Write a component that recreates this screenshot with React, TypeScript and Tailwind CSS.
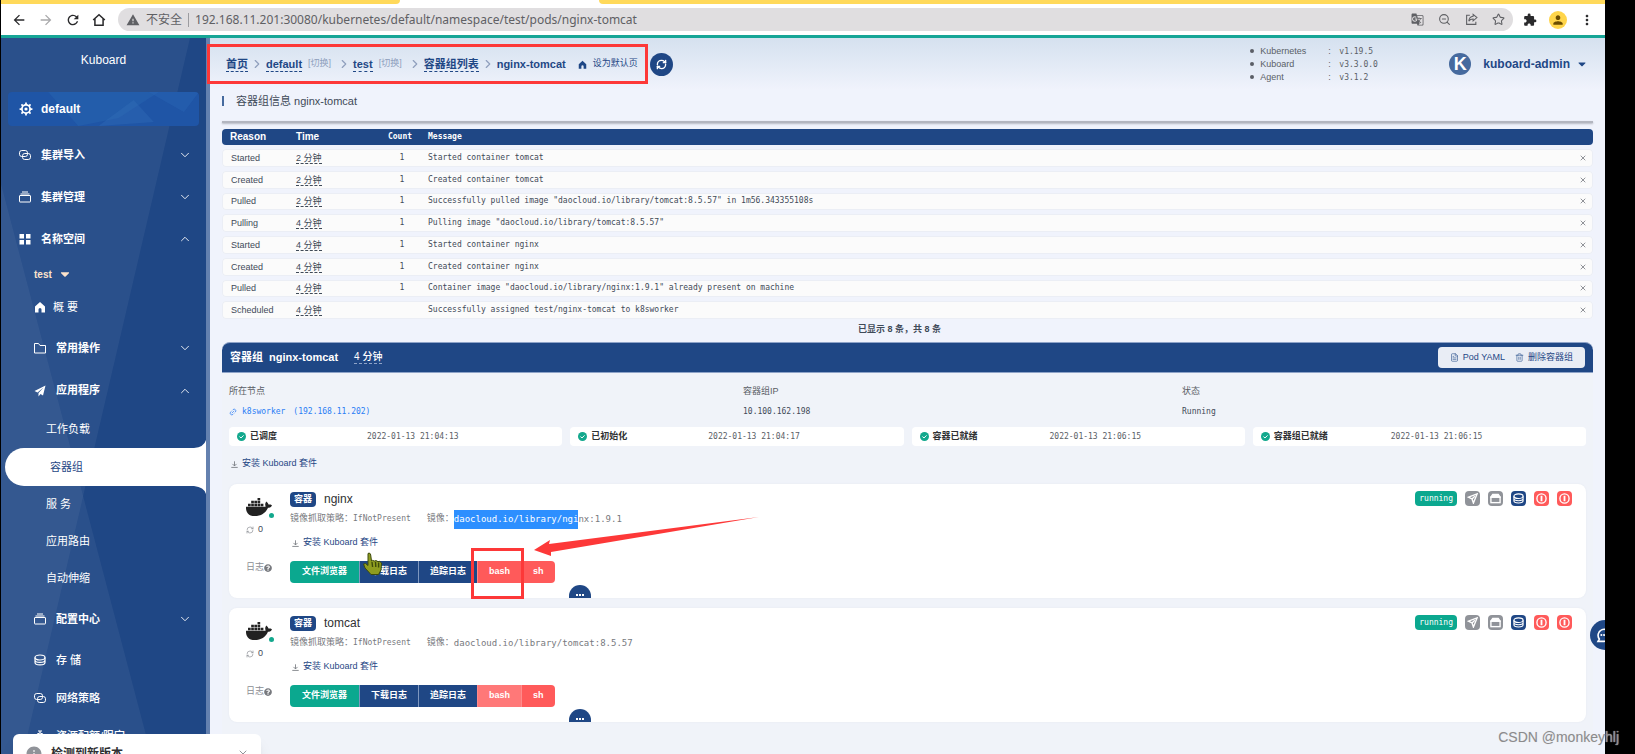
import React from "react";
import { FaCaretDown, FaDocker, FaQuestionCircle } from "react-icons/fa";
import {
  MdArrowBack,
  MdArrowForward,
  MdExtension,
  MdGTranslate,
  MdInfo,
  MdMoreVert,
  MdPerson,
  MdRefresh,
  MdWarning,
} from "react-icons/md";
import {
  ChevronDown,
  ChevronRight,
  ChevronUp,
  FileText,
  Link2,
  RefreshCw,
  Star,
  Trash2,
  X,
  ZoomOut,
} from "lucide-react";

type IconProps = { className?: string };

const GearIcon = ({ className }: IconProps) => (
  <svg viewBox="0 0 24 24" fill="none" stroke="currentColor" className={className}>
    <circle cx="12" cy="12" r="7" strokeWidth="3" />
    <circle cx="12" cy="12" r="1.5" strokeWidth="2.5" />
    <path d="M12 1v4M12 19v4M1 12h4M19 12h4M4.200 4.200 7 7M17 17l2.800 2.800M4.200 19.800 7 17M17 7l2.800-2.800" strokeWidth="3" />
  </svg>
);

const ConnectionIcon = ({ className }: IconProps) => (
  <svg viewBox="0 0 24 24" fill="none" stroke="currentColor" strokeWidth="2" className={className}>
    <rect x="1" y="3" width="16" height="12" rx="4.500" />
    <rect x="7" y="9" width="16" height="12" rx="4.500" />
  </svg>
);

const BoxIcon = ({ className }: IconProps) => (
  <svg viewBox="0 0 24 24" fill="none" stroke="currentColor" strokeWidth="2" className={className}>
    <rect x="1" y="9" width="22" height="13" rx="1" />
    <path d="M3 6h18M6 2h12" />
  </svg>
);

const FolderIcon = ({ className }: IconProps) => (
  <svg viewBox="0 0 24 24" fill="none" stroke="currentColor" strokeWidth="2" className={className}>
    <path d="M1 3h8l3 4h11v15H1z" />
  </svg>
);

const CoinIcon = ({ className }: IconProps) => (
  <svg viewBox="0 0 24 24" fill="none" stroke="currentColor" strokeWidth="2.4" className={className}>
    <ellipse cx="12" cy="7" rx="10" ry="5" />
    <path d="M2 7v10c0 6.500 20 6.500 20 0V7M2 12c0 6.500 20 6.500 20 0" />
  </svg>
);

const GridIcon = ({ className }: IconProps) => (
  <svg viewBox="0 0 24 24" fill="currentColor" className={className}>
    <path d="M1 2h9v9H1zM14 2h9v9h-9zM1 14h9v9H1zM14 14h9v9h-9z" />
  </svg>
);

const HomeIcon = ({ className }: IconProps) => (
  <svg viewBox="0 0 24 24" fill="currentColor" className={className}>
    <path d="M12 2 2 11v12h7v-6a3 3 0 0 1 6 0v6h7V11z" />
  </svg>
);

const HomeOutlineIcon = ({ className }: IconProps) => (
  <svg viewBox="0 0 24 24" fill="none" stroke="currentColor" strokeWidth="2.6" className={className}>
    <path d="M2 12 12 3l10 9M5 10v11h14V10" />
  </svg>
);

const ShareIcon = ({ className }: IconProps) => (
  <svg viewBox="0 0 24 24" fill="none" stroke="currentColor" strokeWidth="2" className={className}>
    <path d="M9 4H3v17h17v-5" />
    <path d="M15 2.500 22 8.500l-7 6V11c-4 0-6 1-8 4 .5-5 3-8.500 8-9z" />
  </svg>
);

const DownloadIcon = ({ className }: IconProps) => (
  <svg viewBox="0 0 24 24" fill="none" stroke="currentColor" strokeWidth="2.400" className={className}>
    <path d="M12 1v15M5 10l7 7 7-7M1 22h22" />
  </svg>
);

const PlaneIcon = ({ className }: IconProps) => (
  <svg viewBox="0 0 24 24" fill="currentColor" className={className}>
    <path d="M23 1 1 12l6 3L19 5 9 16v7l4-5 5 3z" />
  </svg>
);

const TimerIcon = ({ className }: IconProps) => (
  <svg viewBox="0 0 24 24" fill="none" stroke="currentColor" strokeWidth="2" className={className}>
    <circle cx="12" cy="14" r="8" />
    <path d="M8 2h8M12 2v4M12 10v4" />
  </svg>
);

const SendIcon = ({ className }: IconProps) => (
  <svg viewBox="0 0 24 24" fill="none" stroke="currentColor" strokeWidth="3" className={className}>
    <path d="M22 2 3 9l8 4 3 9z" />
    <path d="m11 13 6-6" />
  </svg>
);

const PrinterIcon = ({ className }: IconProps) => (
  <svg viewBox="0 0 24 24" fill="none" stroke="currentColor" strokeWidth="3" className={className}>
    <rect x="2" y="9" width="20" height="12" />
    <path d="M2 9 6 3h12l4 6z" fill="currentColor" />
  </svg>
);

const PowerIcon = ({ className }: IconProps) => (
  <svg viewBox="0 0 24 24" fill="none" stroke="currentColor" strokeWidth="3" className={className}>
    <circle cx="12" cy="12" r="10" />
    <path d="M12 6v12" strokeWidth="4" />
  </svg>
);

const CheckIcon = ({ className }: IconProps) => (
  <svg viewBox="0 0 24 24" className={className}>
    <circle cx="12" cy="12" r="12" fill="#13a88d" />
    <path d="m6.500 12 4 4 7-7" fill="none" stroke="#fff" strokeWidth="2.600" />
  </svg>
);

const ChatIcon = ({ className }: IconProps) => (
  <svg viewBox="0 0 24 24" fill="none" stroke="currentColor" strokeWidth="2.400" className={className}>
    <path d="M3 21.500 5 18A9 9 0 1 1 12 21.500z" />
    <path d="M8 12h.1M12 12h.1M16 12h.1" strokeWidth="3" strokeLinecap="round" />
  </svg>
);

const HandCursor = ({ className }: IconProps) => (
  <svg viewBox="0 0 20 24" className={className}>
    <path
      d="M5 1.500c1.500-1 2.500 0 2.700 1.500l.8 6 1-.6 2 .6 1.500-.4 2 1 1.800-.2 1.700 1.600-.5 7-2.500 4.500H8L2 16l-1.500-4 2-.5 2.500 2z"
      fill="#8f9d20"
      stroke="#3d4a0c"
      strokeWidth="1"
    />
    <path d="m9 10 .6 5M12.500 10l.3 5M15.600 10.500v5" stroke="#3d4a0c" strokeWidth="1.400" />
  </svg>
);

const topMenu = [
  { label: "集群导入", icon: ConnectionIcon, open: false },
  { label: "集群管理", icon: BoxIcon, open: false },
  { label: "名称空间", icon: GridIcon, open: true },
];

const appMenu = ["工作负载", "容器组", "服 务", "应用路由", "自动伸缩"];

const bottomMenu = [
  { label: "存 储", icon: CoinIcon },
  { label: "网络策略", icon: ConnectionIcon },
  { label: "资源配额/限定", icon: TimerIcon },
];

const versions = [
  { name: "Kubernetes", value: "v1.19.5" },
  { name: "Kuboard", value: "v3.3.0.0" },
  { name: "Agent", value: "v3.1.2" },
];

const events = [
  { reason: "Started", time: "2 分钟", count: "1", message: "Started container tomcat" },
  { reason: "Created", time: "2 分钟", count: "1", message: "Created container tomcat" },
  {
    reason: "Pulled",
    time: "2 分钟",
    count: "1",
    message: 'Successfully pulled image "daocloud.io/library/tomcat:8.5.57" in 1m56.343355108s',
  },
  { reason: "Pulling", time: "4 分钟", count: "1", message: 'Pulling image "daocloud.io/library/tomcat:8.5.57"' },
  { reason: "Started", time: "4 分钟", count: "1", message: "Started container nginx" },
  { reason: "Created", time: "4 分钟", count: "1", message: "Created container nginx" },
  {
    reason: "Pulled",
    time: "4 分钟",
    count: "1",
    message: 'Container image "daocloud.io/library/nginx:1.9.1" already present on machine',
  },
  { reason: "Scheduled", time: "4 分钟", count: "", message: "Successfully assigned test/nginx-tomcat to k8sworker" },
];

const conditions = [
  { label: "已调度", time: "2022-01-13 21:04:13" },
  { label: "已初始化", time: "2022-01-13 21:04:17" },
  { label: "容器已就绪", time: "2022-01-13 21:06:15" },
  { label: "容器组已就绪", time: "2022-01-13 21:06:15" },
];

const actions = [
  { label: "进入", icon: SendIcon, color: "bg-[#909399]" },
  { label: "打印", icon: PrinterIcon, color: "bg-[#909399]" },
  { label: "存储", icon: CoinIcon, color: "bg-[#1f4785]" },
  { label: "存活检查", icon: PowerIcon, color: "bg-[#ff5a5a]" },
  { label: "就绪检查", icon: PowerIcon, color: "bg-[#ff5a5a]" },
];

const BrowserBar: React.FC = () => (
  <div className="bg-white">
    <div className="flex h-1">
      <div className="w-[399px] rounded-br-sm bg-[#ffd95a]" />
      <div className="w-[199px]" />
      <div className="flex-1 rounded-bl-sm bg-[#ffd95a]" />
    </div>
    <div className="flex h-[31px] items-center text-[#2a2a2c]">
      <div className="flex w-[117px] items-center gap-[11px] pl-2.5">
        <button aria-label="后退"><MdArrowBack className="size-4" /></button>
        <button aria-label="前进" className="text-[#a9a9ab]"><MdArrowForward className="size-4" /></button>
        <button aria-label="刷新"><MdRefresh className="size-4" /></button>
        <button aria-label="主页"><HomeOutlineIcon className="size-3.5" /></button>
      </div>
      <div className="flex h-[23px] flex-1 items-center rounded-full bg-[#e0dee0] px-2 text-[#5f6064]">
        <MdWarning className="size-3.5" />
        <span className="ml-1.5 text-[12px]">不安全</span>
        <span className="mx-1.5 h-3.5 w-px bg-[#9c9ca0]" />
        <input
          aria-label="地址"
          readOnly
          className="min-w-0 flex-1 bg-transparent font-['Noto_Sans',sans-serif] text-[12px] outline-none"
          value="192.168.11.201:30080/kubernetes/default/namespace/test/pods/nginx-tomcat"
        />
        <div className="flex items-center gap-[14px]">
          <button aria-label="翻译"><MdGTranslate className="size-[13px]" /></button>
          <button aria-label="缩放"><ZoomOut className="size-[13px]" /></button>
          <button aria-label="分享"><ShareIcon className="size-[13px]" /></button>
          <button aria-label="收藏"><Star className="size-[13px]" /></button>
        </div>
      </div>
      <div className="flex items-center gap-3 pl-2.5 pr-2.5">
        <button aria-label="扩展程序"><MdExtension className="size-3.5" /></button>
        <button aria-label="用户" className="flex size-[18px] items-center justify-center rounded-full bg-[#ffd54a] text-[#6b4c00]">
          <MdPerson className="size-3.5" />
        </button>
        <button aria-label="更多"><MdMoreVert className="size-4" /></button>
      </div>
    </div>
    <div className="h-[3px] bg-[#16a596]" />
  </div>
);

const Sidebar: React.FC = () => (
  <aside className="relative w-[209px] shrink-0 overflow-hidden border-r-4 border-[#6481af] bg-[#1f4785] text-[11px] text-white">
    <svg className="absolute inset-0 h-full w-full" viewBox="0 0 205 716" preserveAspectRatio="none" aria-hidden="true">
      <polygon points="0,0 189,0 22,716 0,716" fill="#fff" fillOpacity="0.05" />
      <polygon points="0,146 150,716 0,716" fill="#fff" fillOpacity="0.05" />
    </svg>
    <div className="relative">
      <div className="flex h-[54px] justify-center pt-3.5 text-[12px] leading-4">Kuboard</div>
      <a href="#cluster" className="relative mx-[7px] flex h-[34px] items-center overflow-hidden rounded bg-[#1f55a6] pl-[11px] text-[12px] font-bold">
        <svg className="absolute inset-0 h-full w-full" viewBox="0 0 190 34" preserveAspectRatio="none" aria-hidden="true">
          <polygon points="40,0 150,0 110,26 70,34" fill="#2b68b5" fillOpacity="0.4" />
          <polygon points="90,34 125,8 145,30" fill="#3774bd" fillOpacity="0.3" />
          <polygon points="140,0 190,0 175,20" fill="#2a66b6" fillOpacity="0.4" />
        </svg>
        <GearIcon className="relative size-3.5" />
        <span className="relative ml-2">default</span>
      </a>
      <nav className="pt-2">
        {topMenu.map((item) => (
          <a key={item.label} href="#menu" className="flex h-[42px] items-center pl-[18px] pr-[14px] font-bold">
            <item.icon className="size-3" />
            <span className="ml-2.5 flex-1">{item.label}</span>
            {item.open ? <ChevronUp className="size-3.5" strokeWidth={1.5} /> : <ChevronDown className="size-3.5" strokeWidth={1.5} />}
          </a>
        ))}
        <button className="flex h-7 items-center pl-[33px] text-[10px] font-bold text-[#fde3cb]">
          test <FaCaretDown className="ml-1.5 size-3.5" />
        </button>
        <a href="#overview" className="flex h-[38px] items-center pl-[33px]">
          <HomeIcon className="size-3" />
          <span className="ml-[7px]">概 要</span>
        </a>
        <a href="#common" className="flex h-11 items-center pl-[33px] pr-[14px] font-bold">
          <FolderIcon className="size-3" />
          <span className="ml-2.5 flex-1">常用操作</span>
          <ChevronDown className="size-3.5" strokeWidth={1.5} />
        </a>
        <a href="#apps" className="flex h-[41px] items-center pl-[33px] pr-[14px] font-bold">
          <PlaneIcon className="size-3" />
          <span className="ml-2.5 flex-1">应用程序</span>
          <ChevronUp className="size-3.5" strokeWidth={1.5} />
        </a>
        {appMenu.map((label) =>
          label === "容器组" ? (
            <a key={label} href="#pods" className="relative ml-1 flex h-[38px] items-center rounded-l-full bg-white pl-[45px] text-[#1f4785]">
              <svg className="absolute bottom-full right-0 h-2 w-3" viewBox="0 0 12 8" aria-hidden="true">
                <path d="M0 8Q10 7 12 0v8z" fill="#fff" />
              </svg>
              {label}
              <svg className="absolute right-0 top-full h-2 w-3" viewBox="0 0 12 8" aria-hidden="true">
                <path d="M0 0q10 1 12 8V0z" fill="#fff" />
              </svg>
            </a>
          ) : (
            <a key={label} href="#app" className="flex h-[37px] items-center pl-[45px]">
              {label}
            </a>
          )
        )}
        <a href="#config" className="flex h-11 items-center pl-[33px] pr-[14px] font-bold">
          <BoxIcon className="size-3" />
          <span className="ml-2.5 flex-1">配置中心</span>
          <ChevronDown className="size-3.5" strokeWidth={1.5} />
        </a>
        {bottomMenu.map((item) => (
          <a key={item.label} href="#menu" className="flex h-[38px] items-center pl-[33px] font-medium">
            <item.icon className="size-3" />
            <span className="ml-2.5">{item.label}</span>
          </a>
        ))}
      </nav>
    </div>
  </aside>
);

const Separator = () => <ChevronRight className="mx-0.5 size-3.5 text-[#8f9fbd]" />;

const Crumb = ({ children }: { children: React.ReactNode }) => (
  <a href="#crumb" className="border-b border-dashed border-[#1f4785] font-bold leading-[14px]">
    {children}
  </a>
);

const SwitchLink = () => (
  <a href="#switch" className="ml-1.5 mr-1 text-[9px] text-[#8f9fbd]">[切换]</a>
);

const PageHeader: React.FC = () => (
  <header className="flex h-[52px] items-center bg-linear-to-b from-[#d5e1ef] to-[#f0f3fc] pl-4 pr-[17px] text-[#1f4785]">
    <nav className="relative flex items-center text-[11px]" aria-label="导航">
      <Crumb>首页</Crumb>
      <Separator />
      <Crumb>default</Crumb>
      <SwitchLink />
      <Separator />
      <Crumb>test</Crumb>
      <SwitchLink />
      <Separator />
      <Crumb>容器组列表</Crumb>
      <Separator />
      <span className="font-bold">nginx-tomcat</span>
      <a href="#default" className="ml-3 flex items-center text-[9px]">
        <HomeIcon className="mr-1.5 size-[9px]" />
        设为默认页
      </a>
      <div className="pointer-events-none absolute -inset-y-3 -left-[19px] -right-2.5 border-[3px] border-[#fd3838]" />
    </nav>
    <button aria-label="刷新" className="ml-3 flex size-[23px] items-center justify-center rounded-full bg-[#1f4785] text-white">
      <RefreshCw className="size-[11px]" strokeWidth={3} />
    </button>
    <ul className="ml-auto text-[9px] leading-[13px] text-[#5a5e66]">
      {versions.map((v) => (
        <li key={v.name} className="flex items-center">
          <span className="mr-1.5 size-1 rounded-full bg-[#5a5e66]" />
          <span className="w-[68px]">{v.name}</span>
          <span className="w-[11px]">:</span>
          <span className="w-[110px] font-['DejaVu_Sans_Mono',monospace] text-[8px]">{v.value}</span>
        </li>
      ))}
    </ul>
    <button className="flex items-center text-[12px] font-bold">
      <span className="mr-3 flex size-[22px] items-center justify-center rounded-full bg-[#466a9e] text-[18px] leading-[22px] text-white">K</span>
      kuboard-admin
      <FaCaretDown className="ml-1.5 size-3" />
    </button>
  </header>
);

const EventTable: React.FC = () => (
  <table className="h-[198px] w-full table-fixed border-separate border-spacing-x-0 border-spacing-y-1 text-left text-[9px] leading-3 text-[#3f4a58]">
    <colgroup>
      <col className="w-[66px]" />
      <col className="w-[92px]" />
      <col className="w-10" />
      <col />
      <col className="w-6" />
    </colgroup>
    <thead>
      <tr className="h-4 bg-[#1f4785] text-white">
        <th className="rounded-l-sm p-0 pl-2 text-[10px]">Reason</th>
        <th className="p-0 pl-2 text-[10px]">Time</th>
        <th className="p-0 text-center font-['DejaVu_Sans_Mono',monospace] text-[8px]">Count</th>
        <th className="p-0 pl-2 font-['DejaVu_Sans_Mono',monospace] text-[8px]">Message</th>
        <th className="rounded-r-sm p-0" />
      </tr>
    </thead>
    <tbody>
      {events.map((event, index) => (
        <tr key={index} className="bg-[#fbfbfb]">
          <td className="rounded-l-sm border-y border-l border-[#ebeef5] p-0 pl-2">{event.reason}</td>
          <td className="border-y border-[#ebeef5] p-0 pl-2">
            <span className="border-b border-dashed border-[#3f4a58] leading-[10px]">{event.time}</span>
          </td>
          <td className="border-y border-[#ebeef5] p-0 pl-1 text-center font-['DejaVu_Sans_Mono',monospace] text-[8px]">{event.count}</td>
          <td className="border-y border-[#ebeef5] p-0 pl-2 font-['DejaVu_Sans_Mono',monospace] text-[8px]">{event.message}</td>
          <td className="rounded-r-sm border-y border-r border-[#ebeef5] p-0">
            <button aria-label="关闭" className="ml-2.5 block">
              <X className="size-2 text-[#5a5e66]" />
            </button>
          </td>
        </tr>
      ))}
    </tbody>
  </table>
);

const InstallLink = () => (
  <a href="#install" className="flex h-4 items-center text-[9px] text-[#1f4785]">
    <DownloadIcon className="ml-0.5 mr-1 size-[7px] text-[#5a5e66]" />
    安装 Kuboard 套件
  </a>
);

type ContainerCardProps = {
  name: string;
  selected?: string;
  image: string;
  highlight?: boolean;
};

const ContainerCard: React.FC<ContainerCardProps> = ({ name, selected, image, highlight }) => (
  <section className="relative flex rounded-lg bg-white pb-[15px] shadow-[0_0_2px_#e3e7ef]">
    <div className="w-[61px] pl-[17px] pt-2.5 text-[9px] text-[#8a8d93]">
      <div className="relative w-[26px]">
        <FaDocker className="size-[26px] text-[#222]" />
        <span className="absolute -right-0.5 bottom-0.5 size-[5px] rounded-full bg-[#13a88d]" />
      </div>
      <div className="mt-0.5 flex h-4 items-center">
        <RefreshCw className="mr-1 size-2" />
        <span className="text-[#3f4a58]">0</span>
      </div>
      <div className="mt-[22px] flex h-4 items-center">
        日志
        <FaQuestionCircle className="size-2 text-[#77797e]" />
      </div>
    </div>
    <div className="flex-1 pt-[7px] text-[9px]">
      <div className="flex h-4 items-center">
        <span className="rounded-sm bg-[#1f4785] px-1 text-[9px] font-bold leading-[15px] text-white">容器</span>
        <h3 className="ml-2 text-[12px] text-[#303133]">{name}</h3>
      </div>
      <div className="mt-1 flex h-4 items-center text-[#77797e]">
        镜像抓取策略：
        <span className="font-['DejaVu_Sans_Mono',monospace] text-[8px]">IfNotPresent</span>
        <span className="ml-4">镜像：</span>
        <span className="font-['DejaVu_Sans_Mono',monospace] leading-[19px]">
          {selected && <span className="inline-block bg-[#2d8fff] text-white">{selected}</span>}
          {image}
        </span>
      </div>
      <div className="mt-2"><InstallLink /></div>
      <div className="mt-2.5 flex h-[22px] w-fit overflow-hidden rounded-sm font-bold text-white">
        <button className="bg-[#0ba88f] px-3">文件浏览器</button>
        <button className="border-l border-[#7e97bf] bg-[#1f4785] px-[11px]">下载日志</button>
        <button className="border-l border-[#7e97bf] bg-[#1f4785] px-[11px]">追踪日志</button>
        <button className={`border-l border-[#ff8a8a] px-[11px] ${highlight ? "bg-[#ff5a5a]" : "bg-[#ff7878]"}`}>bash</button>
        <button className="border-l border-[#ff8a8a] bg-[#ff5a5a] px-[11px]">sh</button>
      </div>
    </div>
    <div className="flex items-start gap-2 pr-3.5 pt-[7px]">
      <span className="rounded-sm bg-[#0ba88f] px-1 font-['DejaVu_Sans_Mono',monospace] text-[8px] leading-[15px] text-white">running</span>
      {actions.map((action) => (
        <button key={action.label} aria-label={action.label} className={`flex size-[15px] items-center justify-center rounded-sm text-white ${action.color}`}>
          <action.icon className="size-[11px]" />
        </button>
      ))}
    </div>
    <button
      aria-label="更多"
      className="absolute bottom-0 left-[340px] flex h-[13px] w-[22px] items-end justify-center gap-px rounded-t-[11px] bg-[#1f4785] pb-0.5"
    >
      <span className="size-0.5 bg-white" />
      <span className="size-0.5 bg-white" />
      <span className="size-0.5 bg-white" />
    </button>
    {highlight && (
      <>
        <div className="pointer-events-none absolute left-[242px] top-16 h-[51px] w-[53px] border-[3px] border-[#fd3838]" />
        <svg className="pointer-events-none absolute left-[305px] top-8 h-10 w-[226px]" viewBox="0 0 226 40" aria-hidden="true">
          <polygon points="0,34 16,24 15,28 225,1 17,36 17,40" fill="#fd3838" />
        </svg>
        <HandCursor className="pointer-events-none absolute left-[134px] top-[68px] h-6 w-5" />
      </>
    )}
  </section>
);

const PodPanel: React.FC = () => (
  <div className="rounded-t-lg bg-[#f0f3f9]">
    <div className="flex h-[31px] items-center rounded-t-lg border-y border-[#8ea3c8] bg-[#1f4785] pl-2 pr-2 text-[11px] font-bold text-white">
      <span>容器组</span>
      <h2 className="ml-1.5">nginx-tomcat</h2>
      <span className="ml-4 border-b border-dashed border-[#8ea3c8] text-[10px] font-medium leading-3">4 分钟</span>
      <div className="ml-auto flex h-[21px] items-center gap-2.5 rounded bg-[#e9edf5] px-3 text-[9px] font-normal text-[#1f4785]">
        <button className="flex items-center"><FileText className="mr-1 size-[9px]" strokeWidth={1.5} />Pod YAML</button>
        <button className="flex items-center"><Trash2 className="mr-1 size-[9px]" strokeWidth={1.5} />删除容器组</button>
      </div>
    </div>
    <div className="px-[7px] pt-2.5 text-[9px] text-[#5a5e66]">
      <dl className="grid grid-cols-[514fr_439fr_404fr] leading-4">
        <div>
          <dt>所在节点</dt>
          <dd className="mt-[5px] flex items-center font-['DejaVu_Sans_Mono',monospace] text-[8px] leading-4 text-[#2a7df5]">
            <Link2 className="mr-[5px] size-2 -rotate-45" />
            <a href="#node">k8sworker</a>
            <a href="#node" className="ml-2">(192.168.11.202)</a>
          </dd>
        </div>
        <div>
          <dt>容器组IP</dt>
          <dd className="mt-[5px] font-['DejaVu_Sans_Mono',monospace] text-[8px] leading-4 text-[#3f4a58]">10.100.162.198</dd>
        </div>
        <div>
          <dt>状态</dt>
          <dd className="mt-[5px] font-['DejaVu_Sans_Mono',monospace] text-[8px] leading-4 text-[#3f4a58]">Running</dd>
        </div>
      </dl>
      <div className="mt-[7px] grid grid-cols-4 gap-2">
        {conditions.map((condition) => (
          <div key={condition.label} className="flex h-[19px] items-center rounded bg-white">
            <div className="flex w-[138px] items-center pl-2 font-bold text-[#303133]">
              <CheckIcon className="mr-1 size-[9px]" />
              {condition.label}
            </div>
            <span className="font-['DejaVu_Sans_Mono',monospace] text-[8px]">{condition.time}</span>
          </div>
        ))}
      </div>
      <div className="mt-2.5"><InstallLink /></div>
      <div className="mt-3 flex flex-col gap-2.5 pb-8">
        <ContainerCard name="nginx" selected="daocloud.io/library/ngi" image="nx:1.9.1" highlight />
        <ContainerCard name="tomcat" image="daocloud.io/library/tomcat:8.5.57" />
      </div>
    </div>
  </div>
);

const App: React.FC = () => (
  <div className="relative h-screen overflow-hidden bg-black pl-px pr-[30px] font-['Liberation_Sans','Noto_Sans_CJK_SC',sans-serif]">
    <div className="relative flex h-full flex-col overflow-hidden">
      <BrowserBar />
      <div className="flex min-h-0 flex-1">
        <Sidebar />
        <main className="min-w-0 flex-1 bg-[#f0f3fc]">
          <PageHeader />
          <div className="px-3">
            <div className="flex h-[22px] items-center text-[11px] text-[#3f4a58]">
              <span className="mr-3 h-2.5 w-0.5 bg-[#466a9e]" />
              <h1>容器组信息 nginx-tomcat</h1>
            </div>
            <div className="mb-0.5 mt-[9px] h-0.5 bg-[#b3b6c0] shadow-[0_1px_2px_#b3b6c0]" />
            <EventTable />
            <p className="mb-[7px] h-3 pr-4 text-center text-[9px] font-bold leading-3 text-[#3f4a58]">已显示 8 条，共 8 条</p>
            <PodPanel />
          </div>
        </main>
      </div>
      <div role="alert" className="absolute left-3 top-[734px] flex h-10 w-[248px] items-center rounded-md bg-white px-3 text-[12px] font-bold text-[#303133] shadow-lg">
        <MdInfo className="mr-2 size-[18px] text-[#909399]" />
        检测到新版本
        <button aria-label="关闭" className="ml-auto"><X className="size-3 text-[#909399]" /></button>
      </div>
      <button aria-label="客服" className="absolute right-0 top-[620px] flex h-[30px] w-[15px] items-center overflow-hidden rounded-l-full bg-[#1f4785] pl-1.5 text-white">
        <ChatIcon className="size-4 shrink-0" />
      </button>
    </div>
    <p className="absolute bottom-2 right-4 text-[14px] leading-[18px] text-[#8b8b8d] [text-shadow:0_0_1px_#ddd]">CSDN @monkeyhlj</p>
  </div>
);

export default App;
